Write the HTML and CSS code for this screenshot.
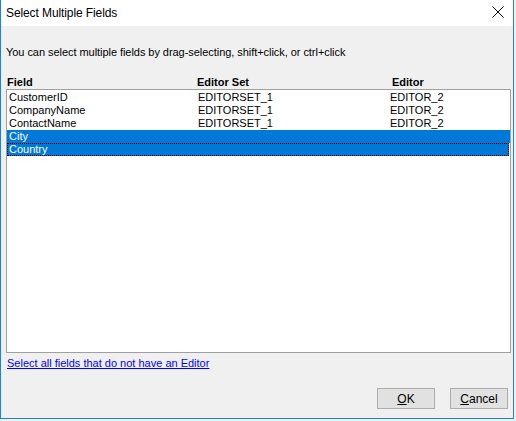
FILE: index.html
```html
<!DOCTYPE html>
<html>
<head>
<meta charset="utf-8">
<link rel="stylesheet" href="styles.css">
</head>
<body>
<div class="window">
  <div class="titlebar">
    <span class="title">Select Multiple Fields</span>
    <svg class="close" width="12" height="12" viewBox="0 0 12 12"><path d="M0.5 0.5 L11.5 11.5 M11.5 0.5 L0.5 11.5" stroke="#000" stroke-width="1" fill="none"/></svg>
  </div>
  <div class="content">
    <p class="hint">You can select multiple fields by drag-selecting, shift+click, or ctrl+click</p>
    <div class="headers">
      <span>Field</span><span>Editor Set</span><span class="h-editor">Editor</span>
    </div>
    <div class="list">
      <div class="row"><span>CustomerID</span><span>EDITORSET_1</span><span>EDITOR_2</span></div>
      <div class="row"><span>CompanyName</span><span>EDITORSET_1</span><span>EDITOR_2</span></div>
      <div class="row"><span>ContactName</span><span>EDITORSET_1</span><span>EDITOR_2</span></div>
      <div class="row selected"><span>City</span><span></span><span></span></div>
      <div class="row selected focused"><span>Country</span><span></span><span></span></div>
    </div>
    <a class="link" href="#">Select all fields that do not have an Editor</a>
    <div class="buttons">
      <button class="btn"><u>O</u>K</button>
      <button class="btn"><u>C</u>ancel</button>
    </div>
  </div>
</div>
</body>
</html>
```

FILE: styles.css
```css
html, body {
  margin: 0;
  padding: 0;
  background: #f0f0f0;
}
body {
  font-family: "Liberation Sans", Arial, sans-serif;
  font-size: 11px;
  color: #000;
}
.window {
  width: 514px;
  height: 419px;
  box-sizing: border-box;
  border: 1px solid #1883d7;
  border-top: none;
  background: #f0f0f0;
  display: flex;
  flex-direction: column;
}
.titlebar {
  height: 26px;
  background: #fff;
  display: flex;
  align-items: center;
  padding-left: 5px;
  padding-right: 8px;
}
.title {
  font-size: 12px;
  margin-top: -1px;
  letter-spacing: -0.1px;
}
.close {
  margin-left: auto;
  margin-right: 1px;
  margin-top: -2px;
}
.content {
  display: flex;
  flex-direction: column;
  padding: 0 2px 0 5px;
  flex: 1;
}
.hint {
  margin: 20px 0 0 0;
  line-height: 13px;
  letter-spacing: -0.05px;
}
.headers {
  margin-top: 16px;
  display: grid;
  grid-template-columns: 190px 195px 1fr;
  padding-left: 1px;
  line-height: 14px;
  font-weight: bold;
}
.list {
  height: 264px;
  box-sizing: border-box;
  border: 1px solid #a0a0a0;
  background: #fff;
  padding: 1px 0 0 0;
}
.row {
  display: grid;
  grid-template-columns: 189px 192px 1fr;
  height: 13px;
  line-height: 13px;
  padding-left: 2px;
}
.row.selected {
  background: #0078d7;
  color: #fff;
}
.row.focused {
  outline: 1px dotted #000;
  outline-offset: -1px;
  margin-right: 1px;
}
.link {
  margin-top: 4px;
  line-height: 13px;
  color: #0000ff;
  text-decoration: underline;
  align-self: flex-start;
  padding-left: 1px;
}
.buttons {
  margin-top: 18px;
  display: flex;
  justify-content: flex-end;
  gap: 15px;
  padding-right: 3px;
}
.btn {
  width: 58px;
  height: 21px;
  box-sizing: border-box;
  background: #e1e1e1;
  border: 1px solid #adadad;
  font-family: "Liberation Sans", Arial, sans-serif;
  font-size: 12px;
  color: #000;
  padding: 0;
  margin: 0;
}
```
